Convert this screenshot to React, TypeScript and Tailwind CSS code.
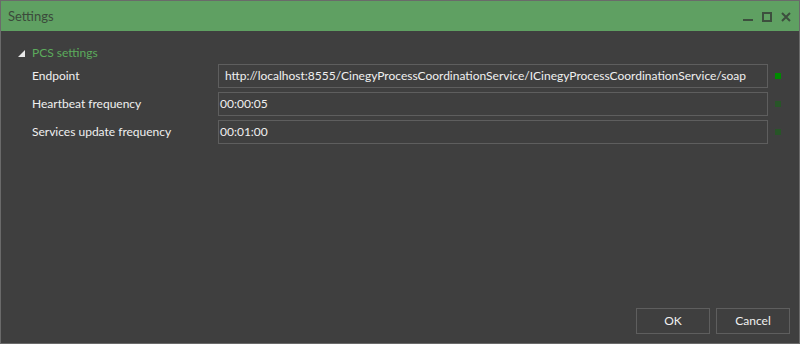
import React from 'react';

const rows = [
  { label: 'Endpoint', value: 'http://localhost:8555/CinegyProcessCoordinationService/ICinegyProcessCoordinationService/soap', active: true },
  { label: 'Heartbeat frequency', value: '00:00:05', active: false },
  { label: 'Services update frequency', value: '00:01:00', active: false },
];

const App: React.FC = () => {
  return (
    <div
      className="w-[800px] h-[344px] flex flex-col border border-[#6a6a6a] bg-[#3f3f3f] text-[12px] text-[#f0f0f0]"
      style={{ fontFamily: 'Lato, "Noto Sans", sans-serif' }}
    >
      <div className="h-[30px] shrink-0 bg-[#5fa062] flex items-center justify-between pl-[7px] pr-[8px]">
        <span className="text-[13px] text-[#3b4a3b] pt-[2px]">Settings</span>
        <div className="flex items-center gap-[9px] text-[#3d4f3e] pt-[2px]">
          <svg width="10" height="10" viewBox="0 0 10 10"><rect x="0" y="7" width="10" height="2" fill="currentColor" /></svg>
          <svg width="10" height="10" viewBox="0 0 10 10"><rect x="1" y="1" width="8" height="8" fill="none" stroke="currentColor" strokeWidth="2" /></svg>
          <svg width="10" height="10" viewBox="0 0 10 10"><path d="M1 1L9 9M9 1L1 9" stroke="currentColor" strokeWidth="2" /></svg>
        </div>
      </div>

      <div className="flex-1 flex flex-col pt-[13px]">
        <div className="flex items-center h-[18px] pl-[17px]">
          <svg width="7" height="7" viewBox="0 0 7 7" className="mr-[7px] shrink-0"><path d="M7 0L7 7L0 7Z" fill="#e8e8e8" /></svg>
          <span className="text-[#5cab5c]">PCS settings</span>
        </div>
        <div className="flex flex-col gap-[4px] mt-[2px]">
          {rows.map((r, i) => (
            <div key={r.label} className="flex items-center h-[24px]">
              <span className="w-[217px] shrink-0 pl-[31px]">{r.label}</span>
              <div className={`w-[550px] shrink-0 h-[24px] border border-[#5e5e5e] flex items-center overflow-hidden ${i === 0 ? 'pl-[6px]' : 'pl-[1px]'}`}>
                <span className="whitespace-nowrap">{r.value}</span>
              </div>
              <div className={`ml-[7px] shrink-0 w-[6px] h-[6px] ${r.active ? 'bg-[#008a00]' : 'bg-[#285528]'}`} />
            </div>
          ))}
        </div>
        <div className="flex-1" />
        <div className="flex justify-end gap-[6px] pr-[9px] pb-[9px]">
          <button className="w-[74px] h-[26px] border border-[#5e5e5e] text-[#f0f0f0]">OK</button>
          <button className="w-[74px] h-[26px] border border-[#5e5e5e] text-[#f0f0f0]">Cancel</button>
        </div>
      </div>
    </div>
  );
};

export default App;
